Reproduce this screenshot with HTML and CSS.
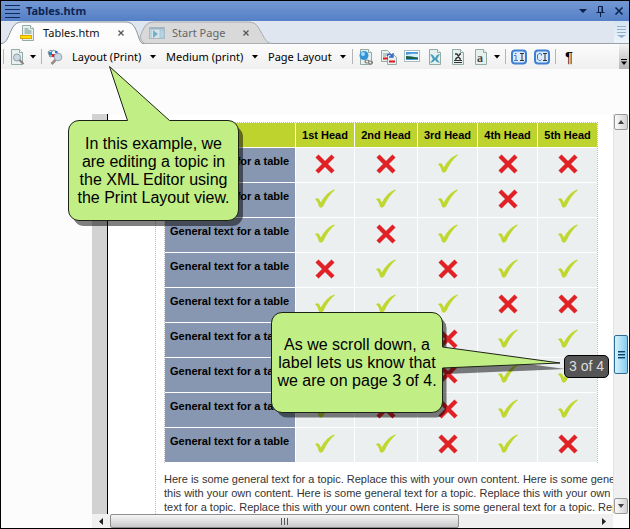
FILE: index.html
```html
<!DOCTYPE html>
<html lang="en">
<head>
<meta charset="utf-8">
<title>Tables.htm</title>
<link rel="stylesheet" href="styles.css">
</head>
<body>
<svg class="defs" aria-hidden="true">
  <defs>
    <symbol id="caret" viewBox="0 0 6 4"><path d="M0 0h6L3 3.500z" fill="#000"/></symbol>
    <symbol id="close" viewBox="0 0 8 8"><path d="M1.500 1.500l5 5M6.500 1.500l-5 5" stroke="currentColor" stroke-width="1.300" fill="none"/></symbol>
    <symbol id="sheet" viewBox="0 0 16 16"><path d="M2.500.5h8l3 3v12h-11z" fill="#e6f0ee" stroke="#93aaa5"/><path d="M10.500.5v3h3" fill="#fff" stroke="#93aaa5"/></symbol>
    <symbol id="yes" viewBox="0 0 20 20"><path d="M0 10.200Q2.500 8.200 4 10Q5 11.500 5.800 13.500Q11 3.500 19 .5L20 .9Q13 6.500 8.200 17.200Q6 19.500 4.600 18.200Q3.600 17.500 3 14.500Q2 11.500 0 10.200z" fill="#bfd730"/></symbol>
    <symbol id="no" viewBox="0 0 20 20"><path d="M2 2l16 16M18 2l-16 16" stroke="#e02227" stroke-width="4.300" fill="none"/></symbol>
  </defs>
</svg>
<div class="window">
  <header class="titlebar">
    <svg class="grip" viewBox="0 0 15 14" aria-hidden="true"><path d="M0 1.500h15M0 5.500h15M0 9.500h15M0 13.500h15" stroke="#10285a"/></svg>
    <h1>Tables.htm</h1>
    <div class="window-buttons">
      <button aria-label="Window menu"><svg viewBox="0 0 10 12"><path d="M1 4h8L5 8z" fill="#0b1f48"/></svg></button>
      <button aria-label="Pin"><svg viewBox="0 0 10 12"><path d="M2.500 7V1.500h4V7M6 1v6M.5 7.500h8M4.500 8v4" stroke="#0b1f48" fill="none"/></svg></button>
      <button aria-label="Close window"><svg viewBox="0 0 10 12"><path d="M1.500 2.500l7 7M8.500 2.500l-7 7" stroke="#0b1f48" stroke-width="1.500"/></svg></button>
    </div>
  </header>

  <nav class="tabs" aria-label="Open documents">
    <div class="tab active">
      <svg class="tab-shape" viewBox="0 0 142 23" preserveAspectRatio="none" aria-hidden="true"><path d="M0 22.500C7 22 7 14 12 6Q15 1 21 1H125Q131 1 134 7C138 14 138 22 142 22.500V23H0z" fill="#fcfcfc"/><path d="M0 22.500C7 22 7 14 12 6Q15 1 21 1H125Q131 1 134 7C138 14 138 22 142 22.500" fill="none" stroke="#8b9499"/></svg>
      <svg class="tab-icon" viewBox="0 0 16 16" aria-hidden="true"><use href="#sheet"/><path d="M4.500 4h4M4.500 6h7M4.500 8h7" stroke="#6f9089"/><rect x=".5" y="10.500" width="11" height="3" fill="#ffe000" stroke="#e0a400"/></svg>
      <a href="#tables">Tables.htm</a>
      <button aria-label="Close Tables.htm"><svg viewBox="0 0 8 8"><use href="#close"/></svg></button>
    </div>
    <div class="tab idle">
      <svg class="tab-shape" viewBox="0 0 136 23" preserveAspectRatio="none" aria-hidden="true"><path d="M1 16Q3 10 6 5Q9 1 15 1H109Q116 1 119 6C125 15 126 22 133 22.500H6Q3 22 1 16z" fill="#d9d9d9" stroke="#a9adb0"/></svg>
      <svg class="tab-icon" viewBox="0 0 16 16" aria-hidden="true"><rect x=".5" y="2.500" width="15" height="11" fill="#d8e4ea" stroke="#aab8c0"/><path d="M1 3.500h14" stroke="#9cb4c2" stroke-width="2"/><path d="M2 5v8M11 5h4v8h-4z" stroke="#a4c4d4" fill="#b8d4e0"/><path d="M4 5l5 4-5 4z" fill="#6fb0cc"/></svg>
      <a href="#start">Start Page</a>
      <button aria-label="Close Start Page"><svg viewBox="0 0 8 8"><use href="#close"/></svg></button>
    </div>
    <button class="tab-list" aria-label="Tab list"><svg viewBox="0 0 9 12"><path d="M0 .5h9M0 3.500h9M0 6.500h9" stroke="#91aecb"/><path d="M0 9h9l-4.500 3z" fill="#91aecb"/></svg></button>
  </nav>

  <div class="toolbar" role="toolbar" aria-label="Editor">
    <i class="sep"></i>
    <button class="tool" aria-label="Preview"><svg viewBox="0 0 16 16"><use href="#sheet"/><circle cx="8" cy="8.500" r="3.500" fill="#cbd9e2" stroke="#8b9caa"/><path d="M10.500 11l4 4" stroke="#8b7d79" stroke-width="2"/></svg></button>
    <button class="drop" aria-label="Preview options"><svg viewBox="0 0 6 4"><use href="#caret"/></svg></button>
    <i class="sep"></i>
    <button class="tool" aria-label="Inspect"><svg viewBox="0 0 16 16"><path d="M1 3l3-2 3 5-4 2z" fill="#dfe9f0" stroke="#6f8ca0"/><path d="M6 1l5 2-4 5-4-2z" fill="#f3f7fa" stroke="#7898ab"/><path d="M2 3h3v3H2z" fill="#168dc1"/><path d="M5 5h3v3H5z" fill="#df202a"/><path d="M8 2h2v2H8z" fill="#3a6cc8"/><circle cx="11" cy="8" r="3.800" fill="#cad7e5" stroke="#93a4b6"/><path d="M8.500 11L4.500 15" stroke="#998984" stroke-width="2.500"/></svg></button>
    <label class="picker"><select aria-label="Layout"><option>Layout (Print)</option></select><svg viewBox="0 0 6 4"><use href="#caret"/></svg></label>
    <label class="picker"><select aria-label="Medium"><option>Medium (print)</option></select><svg viewBox="0 0 6 4"><use href="#caret"/></svg></label>
    <label class="picker"><select aria-label="Page layout"><option>Page Layout</option></select><svg viewBox="0 0 6 4"><use href="#caret"/></svg></label>
    <i class="sep"></i>
    <div class="tools">
      <button class="tool" aria-label="Insert hyperlink"><svg viewBox="0 0 16 16"><use href="#sheet"/><circle cx="6" cy="6.500" r="4.500" fill="#3294d6"/><circle cx="5" cy="5" r="2" fill="#a4dcf8"/><path d="M7 12.500a2 1.500 0 0 1 4 0a2 1.500 0 0 1-4 0M10.500 13.500a2 1.500 0 0 1 4 0a2 1.500 0 0 1-4 0" fill="none" stroke="#777" stroke-width="1.200"/></svg></button>
      <button class="tool" aria-label="Insert cross-reference"><svg viewBox="0 0 16 16"><path d="M.5 1.500h6l3 3v8h-9z" fill="#e9f1ef" stroke="#93aaa5"/><path d="M6.500 5.500h6l3 3v7h-9z" fill="#e9f1ef" stroke="#93aaa5"/><path d="M2 5h5M2 7h3" stroke="#8f9f9c"/><path d="M2 9.500h5M8 12.500h6" stroke="#db1720" stroke-width="2"/><path d="M6 7q2-4 5 0M12 4v4H8" fill="none" stroke="#2d5fcd" stroke-width="1.300"/></svg></button>
      <button class="tool" aria-label="Insert picture"><svg viewBox="0 0 16 16"><rect x=".5" y="1.500" width="15" height="11" fill="#fff" stroke="#a9bbc0"/><path d="M2 3h12v8H2z" fill="#4a9be0"/><path d="M2 6q6-2 12-1v3H2z" fill="#d9f0fb"/><path d="M2 7q6 0 12 2v1H2z" fill="#1d5f45"/></svg></button>
      <button class="tool" aria-label="Insert variable"><svg viewBox="0 0 16 16"><use href="#sheet"/><path d="M3 5l3 1 2 3 2-3 3-1-3 5 3 4-3-1-2-2-2 2-3 1 3-4z" fill="#429dbb"/></svg></button>
      <button class="tool" aria-label="Insert equation"><svg viewBox="0 0 16 16"><use href="#sheet"/><path d="M5 5h2l3 5h1M11 5h-1l-4 5H5" fill="none" stroke="#333" stroke-width="1.300"/><path d="M4 11.500h8M4 13.500h8" stroke="#333"/></svg></button>
      <button class="tool" aria-label="Insert snippet"><svg viewBox="0 0 16 16"><use href="#sheet"/><text x="4" y="13" class="glyph">a</text></svg></button>
    </div>
    <button class="drop" aria-label="Snippet options"><svg viewBox="0 0 6 4"><use href="#caret"/></svg></button>
    <i class="sep"></i>
    <div class="tools">
      <button class="tool" aria-label="Insert cursor"><svg viewBox="0 0 16 16"><rect x="1" y="1.500" width="14" height="13" rx="3" fill="#dcebfb" stroke="#3e7fd1" stroke-width="2"/><path d="M3 6.500h2v5M3 11.500h4M4 4.500h1.500" stroke="#3f78cc" fill="none"/><path d="M9 4.500h4M9 11.500h4M11 4v8" stroke="#333"/></svg></button>
      <button class="tool" aria-label="Character cursor"><svg viewBox="0 0 16 16"><rect x="1" y="1.500" width="14" height="13" rx="3" fill="#dcebfb" stroke="#3e7fd1" stroke-width="2"/><path d="M7.500 6.500V5L6 4.500H5L3.500 6v4L5 11.500h1.500l1-1" stroke="#3f78cc" fill="none"/><path d="M9 4.500h4M9 11.500h4M11 4v8" stroke="#333"/></svg></button>
    </div>
    <i class="sep"></i>
    <button class="tool pilcrow" aria-label="Show marks">¶</button>
    <button class="overflow" aria-label="More buttons"><svg viewBox="0 0 6 6"><path d="M0 .5h6" stroke="#000"/><path d="M0 2.500h6L3 6z" fill="#000"/></svg></button>
  </div>

  <main class="editor">
    <div class="view">
      <div class="gutter"></div>
      <div class="page">
        <article id="tables">
          <table>
            <colgroup><col class="c-label"><col class="c-59"><col class="c-63"><col class="c-60"><col class="c-60"><col class="c-59"></colgroup>
            <thead><tr><td></td><th>1st Head</th><th>2nd Head</th><th>3rd Head</th><th>4th Head</th><th>5th Head</th></tr></thead>
            <tbody>
              <tr><th>General text for a table</th><td><svg><use href="#no"/></svg></td><td><svg><use href="#no"/></svg></td><td><svg><use href="#yes"/></svg></td><td><svg><use href="#no"/></svg></td><td><svg><use href="#no"/></svg></td></tr>
              <tr><th>General text for a table</th><td><svg><use href="#yes"/></svg></td><td><svg><use href="#yes"/></svg></td><td><svg><use href="#yes"/></svg></td><td><svg><use href="#no"/></svg></td><td><svg><use href="#yes"/></svg></td></tr>
              <tr><th>General text for a table</th><td><svg><use href="#yes"/></svg></td><td><svg><use href="#no"/></svg></td><td><svg><use href="#yes"/></svg></td><td><svg><use href="#yes"/></svg></td><td><svg><use href="#yes"/></svg></td></tr>
              <tr><th>General text for a table</th><td><svg><use href="#no"/></svg></td><td><svg><use href="#yes"/></svg></td><td><svg><use href="#no"/></svg></td><td><svg><use href="#yes"/></svg></td><td><svg><use href="#yes"/></svg></td></tr>
              <tr><th>General text for a table</th><td><svg><use href="#yes"/></svg></td><td><svg><use href="#yes"/></svg></td><td><svg><use href="#yes"/></svg></td><td><svg><use href="#no"/></svg></td><td><svg><use href="#no"/></svg></td></tr>
              <tr><th>General text for a table</th><td><svg><use href="#yes"/></svg></td><td><svg><use href="#yes"/></svg></td><td><svg><use href="#no"/></svg></td><td><svg><use href="#yes"/></svg></td><td><svg><use href="#yes"/></svg></td></tr>
              <tr><th>General text for a table</th><td><svg><use href="#yes"/></svg></td><td><svg><use href="#yes"/></svg></td><td><svg><use href="#no"/></svg></td><td><svg><use href="#yes"/></svg></td><td><svg><use href="#yes"/></svg></td></tr>
              <tr><th>General text for a table</th><td><svg><use href="#yes"/></svg></td><td><svg><use href="#no"/></svg></td><td><svg><use href="#no"/></svg></td><td><svg><use href="#yes"/></svg></td><td><svg><use href="#yes"/></svg></td></tr>
              <tr><th>General text for a table</th><td><svg><use href="#yes"/></svg></td><td><svg><use href="#yes"/></svg></td><td><svg><use href="#no"/></svg></td><td><svg><use href="#yes"/></svg></td><td><svg><use href="#no"/></svg></td></tr>
            </tbody>
          </table>
          <p>Here is some general text for a topic. Replace this with your own content. Here is some general text for a topic. Replace<br>this with your own content. Here is some general text for a topic. Replace this with your own content. Here is some general<br>text for a topic. Replace this with your own content. Here is some general text for a topic. Replace this with your own</p>
        </article>
      </div>
      <div class="scroll vertical">
        <button class="arrow" aria-label="Scroll up"><svg viewBox="0 0 6 4"><path d="M0 4h6L3 0z" fill="#444"/></svg></button>
        <div class="track"><div class="thumb"><svg viewBox="0 0 7 8"><path d="M0 .5h7M0 3.500h7M0 6.500h7" stroke="#0f4067"/><path d="M0 1.500h7M0 4.500h7M0 7.500h7" stroke="#5f9cc0"/></svg></div></div>
        <button class="arrow" aria-label="Scroll down"><svg viewBox="0 0 6 4"><path d="M0 0h6L3 4z" fill="#444"/></svg></button>
      </div>
      <div class="scroll horizontal">
        <button class="flat" aria-label="Scroll left"><svg viewBox="0 0 4 7"><path d="M4 0v7L0 3.500z" fill="#222"/></svg></button>
        <div class="track"><div class="thumb"><svg viewBox="0 0 8 7"><path d="M.5 0v7M3.500 0v7M6.500 0v7" stroke="#555"/></svg></div></div>
        <button class="flat" aria-label="Scroll right"><svg viewBox="0 0 4 7"><path d="M0 0v7l4-3.500z" fill="#222"/></svg></button>
      </div>
    </div>
  </main>

  <output class="page-label">3 of 4</output>
  <aside class="callout layout-note">
    <svg viewBox="0 0 178 162" aria-hidden="true"><rect x="5" y="60" width="170" height="100" rx="11" fill="#000" fill-opacity=".5"/><path d="M11 54.500H59.500L41.500.5L101.500 54.500H160A10.500 10.500 0 0 1 170.500 65V144A10.500 10.500 0 0 1 160 154.500H11A10.500 10.500 0 0 1 .5 144V65A10.500 10.500 0 0 1 11 54.500z" fill="#c2ee86" stroke="#1c2314"/></svg>
    <p>In this example, we<br>are editing a topic in<br>the XML Editor using<br>the Print Layout view.</p>
  </aside>
  <aside class="callout scroll-note">
    <svg viewBox="0 0 296 108" aria-hidden="true"><path d="M16 5.500H165A10.500 10.500 0 0 1 175.500 16V41L294 57L175.500 62V95A10.500 10.500 0 0 1 165 105.500H16A10.500 10.500 0 0 1 5.500 95V16A10.500 10.500 0 0 1 16 5.500z" fill="#000" fill-opacity=".5"/><path d="M11 .5H161A10.500 10.500 0 0 1 171.500 11V35L289 51L171.500 56V90A10.500 10.500 0 0 1 161 100.500H11A10.500 10.500 0 0 1 .5 90V11A10.500 10.500 0 0 1 11 .5z" fill="#c2ee86" stroke="#1c2314"/></svg>
    <p>As we scroll down, a<br>label lets us know that<br>we are on page 3 of 4.</p>
  </aside>
</div>
</body>
</html>
```
FILE: styles.css
```css
* { box-sizing: border-box; }

body {
  margin: 0;
  font-family: "Liberation Sans", Arial, sans-serif;
  color: #000;
}

button {
  display: flex;
  align-items: center;
  justify-content: center;
  flex: none;
  margin: 0;
  padding: 0;
  border: 0;
  background: none;
  color: inherit;
}

svg { display: block; flex: none; }

.defs { position: absolute; width: 0; height: 0; }

.window {
  position: relative;
  display: flex;
  flex-direction: column;
  height: 100vh;
  border: 1px solid #000;
  background: #fcfcfc;
  overflow: hidden;
}

.titlebar {
  display: flex;
  align-items: center;
  gap: 6px;
  height: 20px;
  padding: 0 5px 0 4px;
  background: linear-gradient(#7399d4, #557fc6);
}

.grip { width: 15px; height: 14px; }

h1 {
  margin: 0;
  font: bold 11px/20px "Noto Sans", sans-serif;
  color: #0d2452;
}

.window-buttons { display: flex; gap: 8px; margin-left: auto; }
.window-buttons svg { width: 10px; height: 12px; }

.tabs {
  display: flex;
  height: 23px;
  background: #dfe6f0;
  border-bottom: 1px solid #98a2a8;
  font: 11px/23px "Noto Sans", sans-serif;
}

.tab {
  position: relative;
  display: flex;
  align-items: center;
  height: 23px;
  gap: 7px;
}

.tab a { position: relative; color: #111; text-decoration: none; }
.tab button { position: relative; margin-left: auto; color: #555; }
.tab button svg { width: 8px; height: 8px; }
.tab-shape { position: absolute; inset: 0; width: 100%; height: 100%; }
.tab-icon { position: relative; width: 16px; height: 16px; }
.active { z-index: 1; width: 142px; padding: 0 18px 0 19px; }
.idle { width: 136px; margin-left: -4px; padding: 0 25px 0 10px; }
.idle a { color: #666; }

.tab-list {
  width: 15px;
  margin-left: auto;
  background: linear-gradient(#d3e4f1, #edf4fa);
}
.tab-list svg { width: 9px; height: 12px; }

.toolbar {
  display: flex;
  align-items: center;
  gap: 5px;
  height: 25px;
  padding-left: 2px;
  background: linear-gradient(#fcfcfc, #efefef);
}

.sep { flex: none; width: 1px; height: 15px; background: #b5b5b5; }
.tool svg { width: 16px; height: 16px; }
.tools { display: flex; gap: 7px; }
.drop svg, .picker svg { width: 6px; height: 4px; }
.glyph { font: bold 12px "Liberation Serif", serif; fill: #444; }
.pilcrow { width: 16px; font: 15px/16px "Liberation Sans", sans-serif; }

.picker { display: flex; align-items: center; gap: 8px; padding: 0 1px 0 4px; }

select {
  appearance: none;
  margin: 0;
  padding: 0;
  border: 0;
  background: none;
  color: #000;
  font: 11px/20px "Noto Sans", sans-serif;
}

.overflow {
  align-self: stretch;
  align-items: flex-end;
  width: 10px;
  margin-left: auto;
  padding-bottom: 4px;
  background: linear-gradient(#f3f3f3, #b5b5b5);
}
.overflow svg { width: 6px; height: 6px; }

.editor {
  flex: 1;
  min-height: 0;
  padding: 45px 1px 0 91px;
}

.view {
  display: grid;
  grid-template: minmax(0, 1fr) 14px / 15px minmax(0, 1fr) 15px;
  height: 100%;
}

.gutter { background: #d2d2d2; }

.page {
  overflow: hidden;
  padding-left: 47px;
  border-left: 1px solid #000;
  background: #fff;
}

article {
  height: 100%;
  padding: 8px 0 0 8px;
  border-left: 1px dotted #bbb;
  white-space: nowrap;
}

table {
  width: 433px;
  table-layout: fixed;
  border-collapse: separate;
  border-spacing: 0;
  border-top: 1px dotted #bbb;
  border-right: 1px dotted #bbb;
  border-left: 1px dotted #bbb;
}

.c-label { width: 131px; }
.c-59 { width: 59px; }
.c-60 { width: 60px; }
.c-63 { width: 63px; }

th, td { padding: 0; border-right: 1px solid #fff; border-bottom: 1px solid #fff; }
tr > :last-child { border-right: 0; }
thead tr { height: 25px; background: #bfd32f; }
th { font-size: 11px; line-height: 14px; }
tbody tr { height: 35px; }
tbody th { padding: 6px 0 0 5px; background: #8797b1; text-align: left; vertical-align: top; }
tbody td { padding-top: 6px; background: #ebeff0; vertical-align: top; }
td svg { width: 20px; height: 20px; margin: 0 auto; }

article p { margin: 9px 0 0; font-size: 11px; line-height: 14px; color: #333; }

.scroll { display: flex; background: #f0f0f0; }
.track { display: flex; flex: 1; }
.vertical { flex-direction: column; border-left: 1px solid #e3e3e3; }
.vertical .track { flex-direction: column; }
.vertical .thumb { margin-top: 205px; height: 39px; border: 1px solid #2f6d95; border-radius: 2px; background: linear-gradient(90deg, #d5f2fd, #84cdf0); }
.vertical .thumb svg { width: 7px; height: 8px; }
.arrow { height: 16px; border: 1px solid #999; border-radius: 2px; background: linear-gradient(90deg, #fafafa, #d2d2d2); }
.arrow svg { width: 6px; height: 4px; }
.thumb { display: flex; align-items: center; justify-content: center; }
.horizontal { grid-column: 1 / 3; }
.horizontal .thumb { width: 72%; border: 1px solid #8e8e8e; border-radius: 2px; background: linear-gradient(#f5f5f5, #e2e2e2 45%, #c8c8cc); }
.horizontal .thumb svg { width: 8px; height: 7px; }
.flat { width: 18px; }
.flat svg { width: 4px; height: 7px; }

.page-label {
  position: absolute;
  left: 563px;
  top: 354px;
  padding: 0 4px;
  border: 1px solid #000;
  border-radius: 5px;
  background: #555;
  color: #ddd;
  font-size: 14px;
  line-height: 21px;
}

.callout { position: absolute; text-align: center; font-size: 16px; line-height: 18px; }
.callout svg { position: absolute; left: 0; top: 0; overflow: visible; }
.callout p { position: relative; margin: 0; white-space: nowrap; }
.layout-note { left: 67px; top: 65px; width: 171px; padding-top: 69px; }
.layout-note svg { width: 178px; height: 162px; }
.scroll-note { left: 270px; top: 311px; width: 172px; padding-top: 24px; }
.scroll-note svg { width: 296px; height: 108px; }
```
